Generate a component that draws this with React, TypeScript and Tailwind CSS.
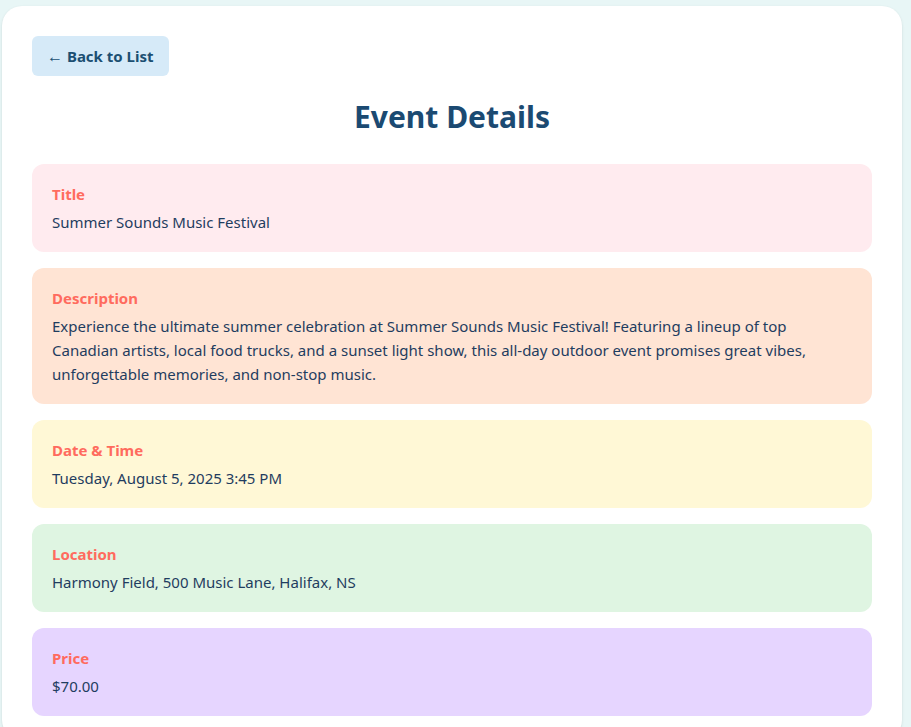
const fields = [
  { label: 'Title', value: 'Summer Sounds Music Festival', bg: 'bg-[#ffebef]' },
  {
    label: 'Description',
    value:
      'Experience the ultimate summer celebration at Summer Sounds Music Festival! Featuring a lineup of top Canadian artists, local food trucks, and a sunset light show, this all-day outdoor event promises great vibes, unforgettable memories, and non-stop music.',
    bg: 'bg-[#ffe4d4]',
  },
  { label: 'Date & Time', value: 'Tuesday, August 5, 2025 3:45 PM', bg: 'bg-[#fff8d6]' },
  { label: 'Location', value: 'Harmony Field, 500 Music Lane, Halifax, NS', bg: 'bg-[#dff5e2]' },
  { label: 'Price', value: '$70.00', bg: 'bg-[#e6d5ff]' },
]

export default function App() {
  return (
    <div className="min-h-screen bg-[#e8f6f6] pt-[6px] pl-[2px] font-['Noto_Sans',sans-serif]">
      <div className="w-[900px] bg-white rounded-[20px] shadow-sm px-[30px] pt-[30px] pb-6">
        <button className="bg-[#d6eaf8] text-[#1b4f72] font-bold text-[15px] rounded-md h-10 px-[15px]">
          <span className="text-[16px]">←</span> Back to List
        </button>

        <h2 className="text-center text-[30px] leading-10 font-bold text-[#1b4a72] mt-[21px] mb-[27px]">
          Event Details
        </h2>

        <div className="flex flex-col gap-4">
          {fields.map((f) => (
            <div key={f.label} className={`${f.bg} rounded-xl px-5 pt-5 pb-[18px]`}>
              <div className="text-[15px] leading-5 font-bold text-[#ff6b5e] mb-[6px]">{f.label}</div>
              <p className="text-[15px] leading-6 text-[#1f3d60]">{f.value}</p>
            </div>
          ))}
        </div>
      </div>
    </div>
  )
}
